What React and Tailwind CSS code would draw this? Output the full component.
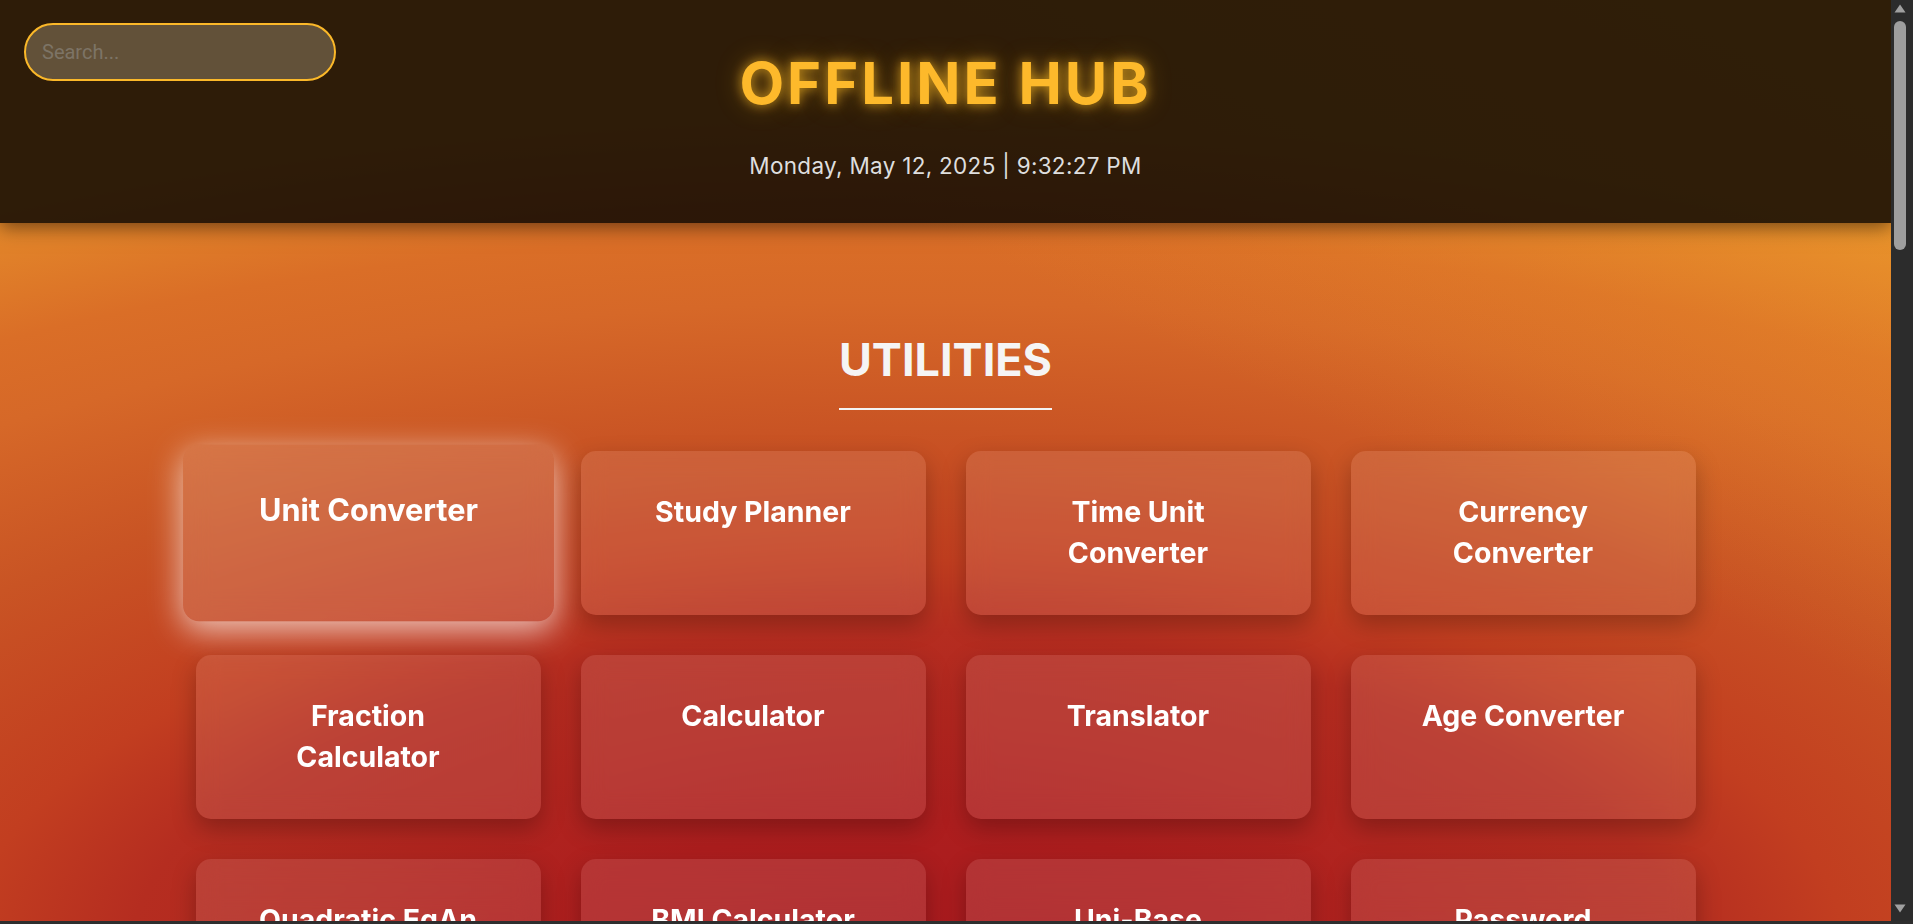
import React from "react";

const tools = [
  "Unit Converter",
  "Study Planner",
  "Time Unit Converter",
  "Currency Converter",
  "Fraction Calculator",
  "Calculator",
  "Translator",
  "Age Converter",
  "Quadratic EqAn",
  "BMI Calculator",
  "Uni-Base Converter",
  "Password Generator",
  "Stopwatch",
  "Countdown Timer",
  "Notes",
  "Color Picker",
];

const Card = ({ name, active }) => (
  <div
    className={
      active
        ? "h-[164px] rounded-[15px] bg-white/15 backdrop-blur-md scale-[1.075] shadow-[0_8px_30px_rgba(255,255,255,0.7)] px-[50px] pt-[40px] text-center text-white font-bold text-[28.5px] leading-[41px]"
        : "h-[164px] rounded-[15px] bg-white/10 backdrop-blur-md shadow-[0_10px_24px_rgba(0,0,0,0.25)] px-[50px] pt-[40px] text-center text-white font-bold text-[28.5px] leading-[41px]"
    }
  >
    {name}
  </div>
);

// window scrollbar, drawn since the page is shot without one
const Scrollbar = () => (
  <div className="w-[22px] bg-[#2c2c2c] flex flex-col items-start pl-[3px]">
    <svg width="12" height="9" viewBox="0 0 12 9" className="mt-[4px]">
      <path d="M6 0.5 L11.5 8.5 L0.5 8.5 Z" fill="#a0a0a0" />
    </svg>
    <div className="mt-[8px] h-[229px] w-[12px] rounded-full bg-[#9e9e9e]" />
    <svg width="12" height="9" viewBox="0 0 12 9" className="mt-auto mb-[8px]">
      <path d="M0.5 0.5 L11.5 0.5 L6 8.5 Z" fill="#a0a0a0" />
    </svg>
  </div>
);

export default function App() {
  return (
    <div className="h-screen flex flex-col overflow-hidden font-['Inter',sans-serif]">
      <div className="flex-1 flex min-h-0">
        <div className="flex-1 min-w-0 overflow-hidden bg-[linear-gradient(to_bottom_left,rgba(240,160,44,0.55)_0%,rgba(240,160,44,0)_38%),radial-gradient(1650px_700px_at_905px_960px,#a81a1e_0%,#ad1e1e_20%,#b52d20_47%,#c23e20_57%,#c95424_76%,#d66828_94%,#da6e27_104%,#e48a2a_120%)]">
          {/* Header */}
          <header className="relative z-10 h-[223px] bg-black/80 shadow-[0_4px_18px_rgba(0,0,0,0.5)] flex flex-col items-center pt-[48px]">
            <input
              type="text"
              placeholder="Search..."
              className="absolute left-[24px] top-[23px] w-[312px] h-[58px] rounded-full border-2 border-[#fbb829] bg-[#fff0cc]/25 px-[16px] font-['Roboto',sans-serif] text-[20px] text-white placeholder:text-[#7d7466] outline-none"
            />
            <h1 className="text-[58px] leading-[70px] font-bold tracking-[3px] text-[#fdb92b] [text-shadow:0_0_12px_rgba(251,185,36,0.75),0_0_26px_rgba(251,185,36,0.35)]">
              OFFLINE HUB
            </h1>
            <p className="mt-[35px] text-[22.5px] leading-[26px] tracking-[0.3px] text-[#dedede]">
              Monday, May 12, 2025 | 9:32:27 PM
            </p>
          </header>

          <main className="pt-[109px] flex flex-col items-center">
            <h2 className="inline-block text-[45px] leading-[55px] font-bold text-[#f5f5f5] pb-[21px] border-b-2 border-[#f3f3f3]">
              UTILITIES
            </h2>
            <div className="mt-[41px] w-[1500px] grid grid-cols-4 gap-[40px]">
              {tools.map((tool, i) => (
                <Card key={tool} name={tool} active={i === 0} />
              ))}
            </div>
          </main>
        </div>
        <Scrollbar />
      </div>
      <div className="h-[3px] bg-[#2e2e2e]" />
    </div>
  );
}
